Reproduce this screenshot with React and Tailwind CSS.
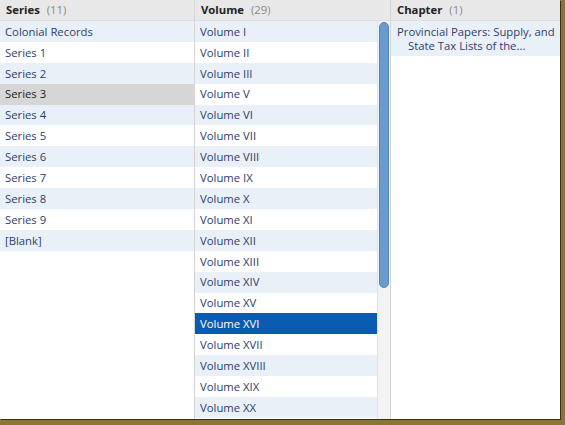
import React from 'react'

const series = [
  'Colonial Records',
  'Series 1',
  'Series 2',
  'Series 3',
  'Series 4',
  'Series 5',
  'Series 6',
  'Series 7',
  'Series 8',
  'Series 9',
  '[Blank]',
]

const volumes = [
  'I', 'II', 'III', 'V', 'VI', 'VII', 'VIII', 'IX', 'X', 'XI', 'XII', 'XIII',
  'XIV', 'XV', 'XVI', 'XVII', 'XVIII', 'XIX', 'XX',
].map((v) => `Volume ${v}`)

function Header({ title, count }) {
  return (
    <div className="h-[21px] flex items-center px-[6px] bg-[#e8e8e8] border-b border-[#dedede] shrink-0">
      <span className="font-bold text-[#222]">{title}</span>
      <span className="ml-[7px] text-[#8a8a8a]">({count})</span>
    </div>
  )
}

function Row({ label, index, selected }) {
  let cls = index % 2 === 0 ? 'bg-[#eaf0f8] text-[#2d3d6a]' : 'bg-white text-[#2d3d6a]'
  if (selected === 'gray') cls = 'bg-[#d6d6d6] text-[#222]'
  if (selected === 'blue') cls = 'bg-[#0b5cb0] text-white'
  return (
    <div className={`h-[20.9px] shrink-0 flex items-center px-[5px] whitespace-nowrap ${cls}`}>
      {label}
    </div>
  )
}

export default function App() {
  return (
    <div
      className="w-[565px] h-[425px] bg-[#8a7535] overflow-hidden text-[11.3px] leading-none"
      style={{ fontFamily: '"Open Sans", "DejaVu Sans", sans-serif' }}
    >
      <div className="w-[560px] h-[419px] bg-white flex overflow-hidden shadow-[1px_1px_0_#3a2f12]">
        {/* Series */}
        <div className="w-[195px] shrink-0 flex flex-col border-r border-[#d4d4d4]">
          <Header title="Series" count="11" />
          <div className="flex flex-col">
            {series.map((s, i) => (
              <Row key={s} label={s} index={i} selected={s === 'Series 3' ? 'gray' : null} />
            ))}
          </div>
        </div>

        {/* Volume */}
        <div className="w-[196px] shrink-0 flex flex-col border-r border-[#d4d4d4]">
          <Header title="Volume" count="29" />
          <div className="flex flex-1 overflow-hidden">
            <div className="flex-1 flex flex-col overflow-hidden">
              {volumes.map((v, i) => (
                <Row key={v} label={v} index={i} selected={v === 'Volume XVI' ? 'blue' : null} />
              ))}
            </div>
            <div className="w-[13px] shrink-0 bg-[#f3f3f3] border-l border-[#e2e2e2] pt-[1px] px-[1px]">
              <div className="h-[266px] rounded-full bg-[#6a9bd0] border border-[#5582b8]" />
            </div>
          </div>
        </div>

        {/* Chapter */}
        <div className="flex-1 flex flex-col">
          <Header title="Chapter" count="1" />
          <div className="bg-[#eaf0f8] text-[#2d3d6a] px-[6px] pt-[4px] pb-[3px] leading-[14px] whitespace-nowrap">
            <div>Provincial Papers: Supply, and</div>
            <div className="pl-[11px]">State Tax Lists of the...</div>
          </div>
        </div>
      </div>
    </div>
  )
}
